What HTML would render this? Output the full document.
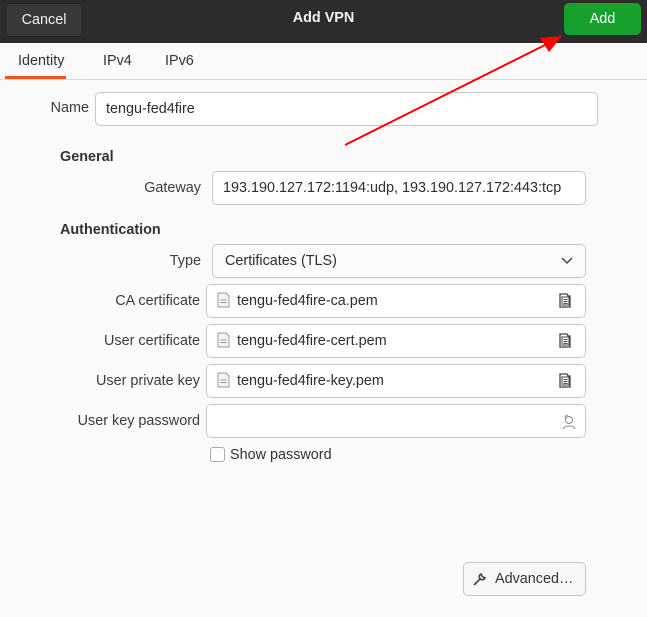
<!DOCTYPE html><html><head><style>
body{margin:0;width:647px;height:617px;background:#fafafa;font-family:"Liberation Sans",sans-serif;font-size:14.4px;color:#333;position:relative;overflow:hidden}
.a{position:absolute}
.hdr{left:0;top:0;width:647px;height:43px;background:#2d2b2b}
.btn{border-radius:5px;color:#eee;display:flex;align-items:center;justify-content:center;font-size:14.4px}
.in{position:absolute;background:#fff;border:1px solid #cdc7c2;border-radius:5px;box-sizing:border-box;display:flex;align-items:center;padding-left:10px;color:#2e2e2e}
.lb{position:absolute;text-align:right;width:200px;color:#3d3d3d}
.ic{position:absolute;right:10px;top:9px}
</style></head><body>
<div class="a hdr"></div>
<div class="a btn" style="left:5px;top:3px;width:76px;height:32px;background:#3a3838;border:1px solid #242222">Cancel</div>
<div class="a" style="left:0;width:647px;top:10px;text-align:center;color:#f2f2f2;font-weight:bold">Add VPN</div>
<div class="a btn" style="left:564px;top:3px;width:77px;height:32px;background:#18a02d;color:#fff">Add</div>
<div class="a" style="left:0;top:43px;width:647px;height:36px;background:#fafafa;border-bottom:1px solid #dcd8d4"></div>
<div class="a" style="left:18px;top:53px">Identity</div>
<div class="a" style="left:5px;top:76px;width:61px;height:3px;background:#e95420"></div>
<div class="a" style="left:103px;top:53px">IPv4</div>
<div class="a" style="left:165px;top:53px">IPv6</div>
<div class="lb" style="left:-111px;top:100px">Name</div>
<div class="in" style="left:95px;top:92px;width:503px;height:34px">tengu-fed4fire</div>
<div class="a" style="left:60px;top:149px;font-weight:bold">General</div>
<div class="lb" style="left:1px;top:180px">Gateway</div>
<div class="in" style="left:212px;top:171px;width:374px;height:34px">193.190.127.172:1194:udp, 193.190.127.172:443:tcp</div>
<div class="a" style="left:60px;top:222px;font-weight:bold">Authentication</div>
<div class="lb" style="left:1px;top:253px">Type</div>
<div class="in" style="left:212px;top:244px;width:374px;height:34px;padding-left:12px;background:#fbfbfb">Certificates (TLS)<svg class="ic" style="top:12px;right:12px" width="12" height="8"><path d="M1 1l5 5 5-5" stroke="#444" fill="none" stroke-width="1.5"/></svg></div>
<div class="lb" style="left:0;top:293px">CA certificate</div>
<div class="lb" style="left:0;top:333px">User certificate</div>
<div class="lb" style="left:0;top:373px">User private key</div>
<div class="lb" style="left:0;top:413px">User key password</div>
<div class="in" style="left:206px;top:284px;width:380px;height:34px;padding-left:30px">tengu-fed4fire-ca.pem</div>
<div class="in" style="left:206px;top:324px;width:380px;height:34px;padding-left:30px">tengu-fed4fire-cert.pem</div>
<div class="in" style="left:206px;top:364px;width:380px;height:34px;padding-left:30px">tengu-fed4fire-key.pem</div>
<div class="in" style="left:206px;top:404px;width:380px;height:34px"><svg class="ic" style="right:8px" width="16" height="16"><circle cx="8" cy="6" r="3.5" stroke="#888" fill="none"/><path d="M2 15c1-4 11-4 12 0M4 4a3 3 0 0 1 3-3" stroke="#888" fill="none"/></svg></div>
<svg class="a" style="left:206px;top:284px" width="380" height="120">
<g id="f"><path d="M12 9h8l3 3v11h-11z" fill="#f3f3f3" stroke="#999"/><path d="M14.5 16h6M14.5 18.5h6" stroke="#999"/>
<path d="M354 10h7l1 2h2v11h-10z" fill="none" stroke="#444" stroke-width="1.3"/><rect x="356" y="13" width="7" height="8" fill="none" stroke="#444"/><path d="M357.5 15.5h4M357.5 17.5h4M357.5 19.5h4" stroke="#444"/></g>
<use href="#f" y="40"/><use href="#f" y="80"/></svg>
<div class="a" style="left:210px;top:447px;width:15px;height:15px;border:1px solid #aaa;border-radius:3px;background:#fff;box-sizing:border-box"></div>
<div class="a" style="left:230px;top:447px">Show password</div>
<div class="a" style="left:463px;top:562px;width:123px;height:34px;border:1px solid #cdc7c2;border-radius:5px;background:#f7f7f7;box-sizing:border-box;display:flex;align-items:center;padding-left:31px">Advanced…</div>
<svg class="a" style="left:472px;top:571px" width="16" height="16"><path d="M2 14l6-6M9 3a3 3 0 1 0 4 4l-2-1-1-1z" stroke="#444" fill="none" stroke-width="1.6"/></svg>
<svg class="a" style="left:0;top:0" width="647" height="617"><path d="M345 145L545 45" stroke="#f00" stroke-width="2"/><path d="M562 36L540 38L549 52z" fill="#f00"/></svg>
</body></html>
